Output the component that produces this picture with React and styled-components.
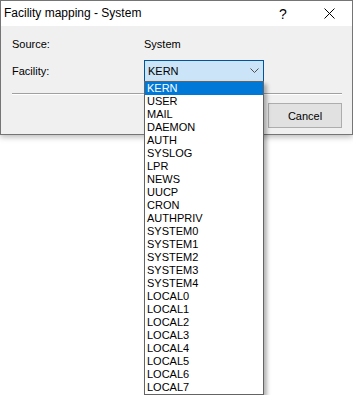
import styled, { createGlobalStyle } from "styled-components";

const GlobalStyle = createGlobalStyle`
  html, body {
    margin: 0;
    padding: 0;
    background: #ffffff;
  }
  body {
    font-family: "Liberation Sans", Arial, sans-serif;
    color: #000;
  }
  #root {
    min-height: 100vh;
  }
`;

const facilities = [
  "KERN", "USER", "MAIL", "DAEMON", "AUTH", "SYSLOG", "LPR", "NEWS",
  "UUCP", "CRON", "AUTHPRIV", "SYSTEM0", "SYSTEM1", "SYSTEM2", "SYSTEM3",
  "SYSTEM4", "LOCAL0", "LOCAL1", "LOCAL2", "LOCAL3", "LOCAL4", "LOCAL5",
  "LOCAL6", "LOCAL7",
];

const Page = styled.div`
  min-height: 100vh;
  background: #ffffff;
`;

const Window = styled.div`
  width: 353px;
  box-sizing: border-box;
  border: 1px solid #757575;
  background: #f0f0f0;
  box-shadow: 0 2px 6px rgba(0, 0, 0, 0.28);
`;

const TitleBar = styled.div`
  height: 25px;
  background: #ffffff;
  display: flex;
  align-items: center;
`;

const Title = styled.div`
  flex: 1;
  padding-left: 3px;
  font-size: 12px;
  line-height: 25px;
`;

const TitleButton = styled.div`
  width: 46px;
  height: 25px;
  display: flex;
  align-items: center;
  justify-content: center;
  font-size: 14px;
  color: #000;
`;

const Body = styled.div`
  padding: 12px 10px 6px 11px;
  display: flex;
  flex-direction: column;
`;

const Row = styled.div`
  display: grid;
  grid-template-columns: 132px 120px;
  align-items: center;
  font-size: 11px;
  line-height: 13px;
  margin-top: ${(p) => p.$gap || 0}px;
`;

const Combo = styled.div`
  position: relative;
  height: 22px;
  box-sizing: border-box;
  border: 1px solid #005499;
  background: #cce4f7;
  display: flex;
  align-items: center;
  padding-left: 3px;
  font-size: 11px;
`;

const Chevron = styled.svg`
  position: absolute;
  right: 4px;
  top: 7px;
`;

const List = styled.div`
  position: absolute;
  left: -1px;
  top: 20px;
  width: 120px;
  box-sizing: border-box;
  border: 1px solid #646464;
  background: #ffffff;
  box-shadow: 3px 3px 4px rgba(0, 0, 0, 0.3);
  z-index: 2;
`;

const Item = styled.div`
  height: 13px;
  line-height: 13px;
  padding-left: 2px;
  font-size: 11px;
  background: ${(p) => (p.$selected ? "#0078d7" : "transparent")};
  color: ${(p) => (p.$selected ? "#ffffff" : "#000000")};
`;

const Separator = styled.div`
  margin-top: 11px;
  height: 1px;
  background: #a0a0a0;
  border-bottom: 1px solid #ffffff;
`;

const Footer = styled.div`
  margin-top: 8px;
  display: flex;
  justify-content: flex-end;
`;

const Button = styled.button`
  width: 74px;
  height: 25px;
  box-sizing: border-box;
  border: 1px solid #adadad;
  background: #e1e1e1;
  font-family: "Liberation Sans", Arial, sans-serif;
  font-size: 11px;
  color: #000;
  padding: 0;
`;

export default function App() {
  return (
    <Page>
      <GlobalStyle />
      <Window>
        <TitleBar>
          <Title>Facility mapping - System</Title>
          <TitleButton>?</TitleButton>
          <TitleButton>
            <svg width="11" height="11" viewBox="0 0 11 11">
              <path d="M0.5 0.5 L10.5 10.5 M10.5 0.5 L0.5 10.5" stroke="#000" strokeWidth="1" />
            </svg>
          </TitleButton>
        </TitleBar>
        <Body>
          <Row>
            <span>Source:</span>
            <span>System</span>
          </Row>
          <Row $gap={9}>
            <span>Facility:</span>
            <Combo>
              KERN
              <Chevron width="9" height="5" viewBox="0 0 9 5">
                <path d="M0.5 0.5 L4.5 4.5 L8.5 0.5" fill="none" stroke="#505050" strokeWidth="1" />
              </Chevron>
              <List>
                {facilities.map((f, i) => (
                  <Item key={f} $selected={i === 0}>
                    {f}
                  </Item>
                ))}
              </List>
            </Combo>
          </Row>
          <Separator />
          <Footer>
            <Button>Cancel</Button>
          </Footer>
        </Body>
      </Window>
    </Page>
  );
}
